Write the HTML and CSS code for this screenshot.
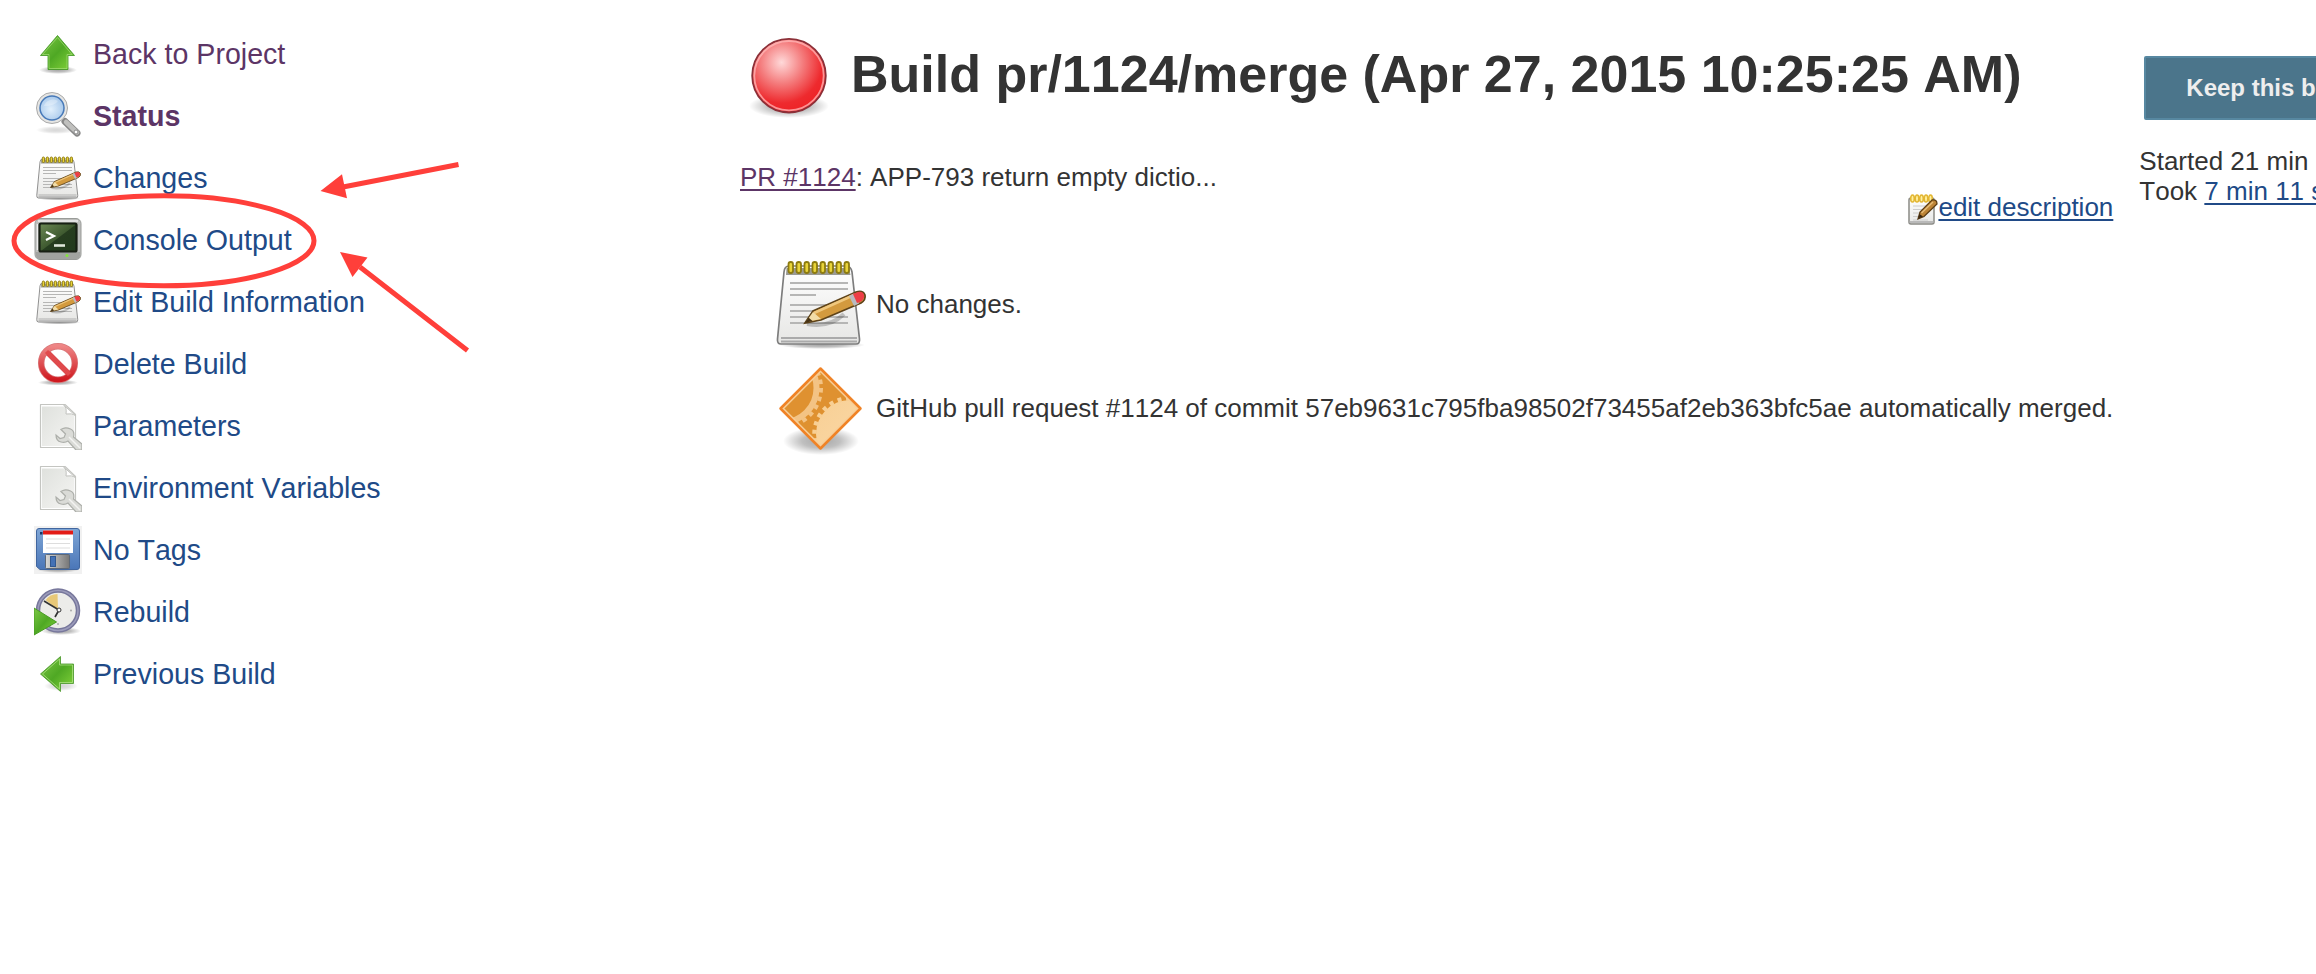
FILE: index.html
```html
<!DOCTYPE html>
<html lang="en">
<head>
<meta charset="utf-8">
<title>Build pr/1124/merge</title>
<link rel="stylesheet" href="styles.css">
</head>
<body>
<svg class="defs" aria-hidden="true">
  <defs>
    <linearGradient id="green" x1="0" y1="0" x2="1" y2="1"><stop offset="0" stop-color="#7cc845"/><stop offset=".5" stop-color="#4fa824"/><stop offset="1" stop-color="#86d63c"/></linearGradient>
    <linearGradient id="paper" x1="0" y1="0" x2="0" y2="1"><stop offset="0" stop-color="#ffffff"/><stop offset="1" stop-color="#e6e6e4"/></linearGradient>
    <linearGradient id="doc" x1="0" y1="0" x2="1" y2="1"><stop offset="0" stop-color="#dfe1dd"/><stop offset="1" stop-color="#f5f5f3"/></linearGradient>
    <linearGradient id="screen" x1="0" y1="0" x2="1" y2="1"><stop offset="0" stop-color="#6d8a55"/><stop offset=".5" stop-color="#3f5a30"/><stop offset=".52" stop-color="#263d1f"/><stop offset="1" stop-color="#223a1c"/></linearGradient>
    <linearGradient id="metal" x1="0" y1="0" x2="1" y2="0"><stop offset="0" stop-color="#d8d8d6"/><stop offset="1" stop-color="#777"/></linearGradient>
    <linearGradient id="blue" x1="0" y1="0" x2="0" y2="1"><stop offset="0" stop-color="#7fa6d6"/><stop offset="1" stop-color="#4a76b8"/></linearGradient>
    <linearGradient id="no" x1="0" y1="0" x2="0" y2="1"><stop offset="0" stop-color="#ee8585"/><stop offset="1" stop-color="#cf1a20"/></linearGradient>
    <linearGradient id="peach" x1="0" y1="0" x2="1" y2="1"><stop offset="0" stop-color="#f8cf94"/><stop offset="1" stop-color="#fbdcae"/></linearGradient>
    <radialGradient id="glass" cx=".45" cy=".55" r=".6"><stop offset="0" stop-color="#e2f0fc"/><stop offset="1" stop-color="#a4c6ea"/></radialGradient>
    <radialGradient id="ball" cx=".4" cy=".32" r=".65"><stop offset="0" stop-color="#ffd9d9"/><stop offset=".45" stop-color="#f47b7c"/><stop offset=".85" stop-color="#ee2a2e"/><stop offset="1" stop-color="#ee2428"/></radialGradient>
    <radialGradient id="shade"><stop offset="0" stop-color="#000" stop-opacity=".35"/><stop offset=".5" stop-color="#000" stop-opacity=".25"/><stop offset="1" stop-color="#000" stop-opacity="0"/></radialGradient>

    <symbol id="i-up" viewBox="0 0 48 48">
      <ellipse cx="24" cy="40" rx="19" ry="4" fill="url(#shade)"/>
      <path d="M23.500 5.500 40.500 25.500H34V39.500H14V25.500H6.500Z" fill="url(#green)" stroke="#3f9520" stroke-opacity=".8"/>
      <path d="M23.500 7.500 38 24.500H33V38.500H15V24.500H8.500Z" fill="none" stroke="#a9e07c" stroke-opacity=".65"/>
    </symbol>
    <symbol id="i-search" viewBox="0 0 48 48">
      <ellipse cx="22" cy="38" rx="20" ry="4" fill="url(#shade)" opacity=".45"/>
      <path d="M31 29.500 43 41" stroke="#888" stroke-width="7" stroke-linecap="round"/>
      <path d="M32 30 43 40.500" stroke="#c0c0be" stroke-width="4.500" stroke-linecap="round"/>
      <circle cx="42" cy="40" r="2" fill="#fff" stroke="#888"/>
      <circle cx="18" cy="16" r="15.500" fill="#e5e5e3" stroke="#aaa"/>
      <circle cx="18" cy="16" r="12" fill="url(#glass)" stroke="#4779b8" stroke-width="1.500"/>
      <path d="M10 14a9 8 0 0 1 14-5q-3 5-14 5" fill="#fff" opacity=".3"/>
    </symbol>
    <symbol id="i-note" viewBox="0 0 96 96">
      <ellipse cx="50" cy="89" rx="43" ry="4" fill="url(#shade)"/>
      <path d="M17 10H74Q79 10 80 16L87.500 83Q88 88 84 88H9Q5 88 5.500 83L12 16Q12.500 10 17 10Z" fill="url(#paper)" stroke="#7d7d7d" stroke-width="1.700"/>
      <path d="M14.500 12H77L78.500 19H14Z" fill="#9a9a92"/>
      <path d="M9 82H85M9 85.500H85" stroke="#aaa" stroke-width="1.800"/>
      <path d="M18 27H76M18 33H76M18 39H44M18 49H66M18 55H52M18 61H76M18 67H76" stroke="#b6b6b5" stroke-width="2"/>
      <g fill="#e9d43a" stroke="#8d7b10" stroke-width="1.800"><rect x="16.500" y="6" width="4.500" height="11" rx="2.200"/><rect x="24.500" y="6" width="4.500" height="11" rx="2.200"/><rect x="32.500" y="6" width="4.500" height="11" rx="2.200"/><rect x="40.500" y="6" width="4.500" height="11" rx="2.200"/><rect x="48.500" y="6" width="4.500" height="11" rx="2.200"/><rect x="56.500" y="6" width="4.500" height="11" rx="2.200"/><rect x="64.500" y="6" width="4.500" height="11" rx="2.200"/><rect x="72.500" y="6" width="4.500" height="11" rx="2.200"/></g>
      <path d="M35 68Q58 72 72 58" fill="none" stroke="#000" stroke-opacity=".2" stroke-width="4"/>
      <path d="M33 67 41 55 84 36Q91 34 93 39 94 44 89 47L49 64Z" fill="#d39a3e" stroke="#5e4319" stroke-width="1.700"/>
      <path d="M42 57 82 39" stroke="#efc77d" stroke-width="2.500"/>
      <path d="M34 66 41 56 49 63Z" fill="#f2dda8"/><path d="M33 67 36.500 61.500 40.500 65Z" fill="#463315"/>
      <path d="M77 40 82 37.500 87 47.500 82 50Z" fill="#b9bbc0"/>
      <path d="M81 38 86 36Q91 35 92 39 93 43 88 46L85 47Z" fill="#ed3e46"/>
    </symbol>
    <symbol id="i-term" viewBox="0 0 48 48">
      <rect x="1" y="2.500" width="46" height="41" rx="5" fill="#bdbebc" stroke="#999b98"/>
      <path d="M4 5H44M3.500 8V34" stroke="#eee" stroke-width="1.500"/>
      <path d="M2 36H46V39Q46 43 42 43H6Q2 43 2 39Z" fill="#a1a3a0"/>
      <rect x="5.500" y="7.500" width="37" height="28" rx="1.500" fill="url(#screen)" stroke="#182014" stroke-width="2.200"/>
      <path d="M12 16 20 20 12 24" fill="none" stroke="#fff" stroke-width="2.200"/><path d="M20 29.500H31" stroke="#dfe6da" stroke-width="2.600"/>
      <circle cx="33" cy="39.500" r="1.500" fill="#83e43c"/>
    </symbol>
    <symbol id="i-del" viewBox="0 0 48 48">
      <ellipse cx="24" cy="42.500" rx="20" ry="3" fill="url(#shade)"/>
      <circle cx="24" cy="23" r="16.800" fill="none" stroke="#d8787a" stroke-width="6.500"/>
      <path d="M12.500 11.500 35.500 34.500" stroke="#d8494c" stroke-width="5.500"/>
      <circle cx="24" cy="23" r="16.800" fill="none" stroke="url(#no)" stroke-width="5"/>
      <path d="M12.500 11.500 35.500 34.500" stroke="#e04a4c" stroke-width="4.500"/>
    </symbol>
    <symbol id="i-param" viewBox="0 0 48 48">
      <path d="M6.500 2.500H31L41.500 12.500V45.500H6.500Z" fill="#fff" stroke="#c4c5c1" stroke-width="1.200" stroke-linejoin="round"/>
      <path d="M8 4.500H30L40 14V44H8Z" fill="url(#doc)"/>
      <path d="M29.500 3Q33 5 32 12 38 11 41.500 13.500Z" fill="#fff" stroke="#c2c3bf"/>
      <path d="M27 27.500 31.500 32 30 35.500 26 36.500 22 33Q22 39 27 40 31 41 34 39L42 48H48V42L39.500 35Q41 29 36.500 27 32 25 29 26.500Z" fill="#dadbd7" stroke="#adafaa" stroke-width="1.200"/>
      <path d="M35 35 46 46" stroke="#f3f3f1" stroke-width="1.500"/>
    </symbol>
    <symbol id="i-save" viewBox="0 0 48 48">
      <path d="M0 0H48V48H0Z" fill="#f1f1f1"/>
      <ellipse cx="24" cy="43" rx="22" ry="4" fill="url(#shade)"/>
      <path d="M5 2.500H43Q45.500 2.500 45.500 5V41Q45.500 43.500 43 43.500H6L2.500 40.500V5Q2.500 2.500 5 2.500Z" fill="url(#blue)" stroke="#41669f"/>
      <path d="M9 4.500H39V27H9Z" fill="#fff"/><path d="M9 4.500H39V8.500H9Z" fill="#e31b16"/>
      <path d="M12 13H36M12 17.500H36M12 22H36" stroke="#ddd"/>
      <rect x="6" y="6" width="2.500" height="2.500" fill="#183766"/>
      <rect x="11.500" y="28.500" width="24" height="14" rx="1" fill="url(#metal)" stroke="#5c6878"/>
      <rect x="16.500" y="30.500" width="5" height="10" fill="#4371b5" stroke="#31588f"/>
    </symbol>
    <symbol id="i-rebuild" viewBox="0 0 48 48">
      <ellipse cx="27" cy="43" rx="20" ry="4" fill="url(#shade)"/>
      <circle cx="24" cy="22.500" r="20" fill="#ecece9" stroke="#77779b" stroke-width="4.500"/>
      <circle cx="24" cy="22.500" r="20" fill="none" stroke="#9c9cbb" stroke-width="1.500"/>
      <path d="M24 22 11.500 12Q16 6 23.500 6Z" fill="#e8c878"/>
      <path d="M10 13 25 22 21 29" fill="none" stroke="#333" stroke-width="1.700"/><circle cx="25" cy="22" r="2" fill="#fff" stroke="#333"/>
      <circle cx="37" cy="22.500" r="1" fill="#aaa"/><circle cx="24" cy="36" r="1" fill="#aaa"/>
      <path d="M0 20 22.500 34 0 47Z" fill="url(#green)" stroke="#489b25"/>
    </symbol>
    <symbol id="i-prev" viewBox="0 0 48 48">
      <ellipse cx="27" cy="36" rx="17" ry="5" fill="url(#shade)" opacity=".5"/>
      <path d="M6.500 24 26.500 6.500V14H39.500V33.500H26.500V41.500Z" fill="url(#green)" stroke="#49962a" stroke-opacity=".8"/>
      <path d="M8.500 24 25.500 9V15H38.500V32.500H25.500V39Z" fill="none" stroke="#b5e68b" stroke-opacity=".7"/>
    </symbol>
    <symbol id="i-edit" viewBox="0 0 30 32">
      <rect x="1" y="4" width="25" height="26" rx="2" fill="url(#paper)" stroke="#8a8a85" stroke-width="1.500"/>
      <path d="M5 12H20M5 15.500H18M5 19H16M5 22.500H12M5 26H20" stroke="#ccc"/>
      <path d="M1 28H26" stroke="#aaa" stroke-width="1.500"/>
      <g fill="#fff1a0" stroke="#e3b632" stroke-width="1.600"><ellipse cx="4.500" cy="4.500" rx="1.800" ry="3.500"/><ellipse cx="9" cy="4.500" rx="1.800" ry="3.500"/><ellipse cx="13.500" cy="4.500" rx="1.800" ry="3.500"/><ellipse cx="18" cy="4.500" rx="1.800" ry="3.500"/><ellipse cx="22.500" cy="4.500" rx="1.800" ry="3.500"/></g>
      <path d="M10 25 12 18 24 6Q29 5 29 10L16 22.500Z" fill="#bd8437" stroke="#5c3d14" stroke-width="1.300"/><path d="M13.500 19 25 8" stroke="#e7bd78" stroke-width="1.500"/><path d="M10 25 11.500 20 15 22.500Z" fill="#3b2812"/>
    </symbol>
    <symbol id="i-ball" viewBox="0 0 96 96">
      <ellipse cx="49" cy="76" rx="40" ry="12" fill="url(#shade)"/>
      <circle cx="49" cy="45.700" r="36.800" fill="url(#ball)" stroke="#8c3038" stroke-width="1.800"/>
      <circle cx="49" cy="45.700" r="34.700" fill="none" stroke="#ffb9b9" stroke-width="1.800" opacity=".75"/>
    </symbol>
    <symbol id="i-gear" viewBox="0 0 96 96">
      <ellipse cx="49" cy="81" rx="38" ry="14" fill="url(#shade)"/>
      <clipPath id="dia"><path d="M48.500 9 88 48.500 48.500 88 9 48.500Z"/></clipPath>
      <path d="M48.500 9 88 48.500 48.500 88 9 48.500Z" fill="#df9130"/>
      <g clip-path="url(#dia)">
        <circle cx="10" cy="28" r="34.500" fill="none" stroke="#f3c384" stroke-width="6"/>
        <circle cx="10" cy="28" r="39" fill="none" stroke="#f3c384" stroke-width="4" stroke-dasharray="4.500 4.250"/>
        <circle cx="78" cy="74" r="34" fill="url(#peach)"/>
        <circle cx="78" cy="74" r="35.500" fill="none" stroke="#f8cf94" stroke-width="4.500" stroke-dasharray="4 4.580"/>
      </g>
      <path d="M48.500 11 86 48.500 48.500 86 11 48.500Z" fill="none" stroke="#f8cf98" stroke-width="2"/>
      <path d="M48.500 8.500 88.500 48.500 48.500 88.500 8.500 48.500Z" fill="none" stroke="#f08326" stroke-width="2.500" stroke-linejoin="round"/>
    </symbol>
  </defs>
</svg>

<div class="page">
  <nav class="tasks">
    <a class="task visited" href="#"><svg class="icon"><use href="#i-up"/></svg>Back to Project</a>
    <a class="task visited current" href="#"><svg class="icon"><use href="#i-search"/></svg>Status</a>
    <a class="task" href="#"><svg class="icon"><use href="#i-note"/></svg>Changes</a>
    <a class="task" href="#"><svg class="icon"><use href="#i-term"/></svg>Console Output</a>
    <a class="task" href="#"><svg class="icon"><use href="#i-note"/></svg>Edit Build Information</a>
    <a class="task" href="#"><svg class="icon"><use href="#i-del"/></svg>Delete Build</a>
    <a class="task" href="#"><svg class="icon"><use href="#i-param"/></svg>Parameters</a>
    <a class="task" href="#"><svg class="icon"><use href="#i-param"/></svg>Environment Variables</a>
    <a class="task" href="#"><svg class="icon"><use href="#i-save"/></svg>No Tags</a>
    <a class="task" href="#"><svg class="icon"><use href="#i-rebuild"/></svg>Rebuild</a>
    <a class="task" href="#"><svg class="icon"><use href="#i-prev"/></svg>Previous Build</a>
  </nav>

  <main class="main">
    <h1 class="title"><svg class="icon-large"><use href="#i-ball"/></svg><span>Build pr/1124/merge (Apr 27, 2015 10:25:25 AM)</span></h1>
    <div class="description"><a class="link visited" href="#">PR #1124</a>: APP-793 return empty dictio...</div>
    <div class="edit"><svg class="icon-small"><use href="#i-edit"/></svg><a class="link" href="#">edit description</a></div>
    <div class="summary">
      <div class="row"><svg class="icon-large"><use href="#i-note"/></svg><span>No changes.</span></div>
      <div class="row"><svg class="icon-large"><use href="#i-gear"/></svg><span>GitHub pull request #1124 of commit 57eb9631c795fba98502f73455af2eb363bfc5ae automatically merged.</span></div>
    </div>
  </main>

  <aside class="side">
    <button class="keep">Keep this build forever</button>
    <div>Started 21 min</div>
    <div>Took <a class="link" href="#">7 min 11 sec</a></div>
  </aside>

  <svg class="annotation" viewBox="0 0 500 380">
    <ellipse cx="164" cy="240.800" rx="150" ry="45" fill="none" stroke="#ff3f3a" stroke-width="5"/>
    <path d="M343 187 458.500 164.500M360 267 467.500 350.500" stroke="#ff3f3a" stroke-width="5"/>
    <path d="M320.500 191 342 174.300 347 198.300ZM340 252 367.500 257.500 352.500 277Z" fill="#ff3f3a"/>
  </svg>
</div>
</body>
</html>
```
FILE: styles.css
```css
* { box-sizing: border-box; }
body {
  margin: 0;
  background: #fff;
  color: #333;
  font: 26px/30px "Liberation Sans", Arial, sans-serif;
  font-kerning: none;
  overflow: hidden;
}
.defs { position: absolute; width: 0; height: 0; }
.page {
  position: relative;
  display: flex;
  width: 2316px;
  height: 974px;
  overflow: hidden;
  white-space: nowrap;
}
.tasks {
  flex: 0 0 740px;
  display: flex;
  flex-direction: column;
  align-items: flex-start;
  gap: 14px;
  padding: 30px 0 0 34px;
}
.task {
  display: flex;
  align-items: center;
  gap: 11px;
  height: 48px;
  font-size: 28.6px;
  color: #204a87;
  text-decoration: none;
}
.icon { width: 48px; height: 48px; }
.icon-large { width: 96px; height: 96px; flex: none; }
.icon-small { width: 30px; height: 32px; }
.task.visited, .link.visited { color: #5c3566; }
.current { font-weight: bold; }
.main { flex: 0 0 1373px; padding-top: 30px; }
.title {
  display: flex;
  align-items: flex-start;
  gap: 15px;
  height: 132px;
  margin: 0;
  font-size: 52px;
  line-height: 88px;
}
.link {
  color: #204a87;
  text-decoration: underline;
  text-decoration-thickness: 2px;
  text-underline-offset: 3px;
  text-decoration-skip-ink: none;
}
.edit {
  display: flex;
  justify-content: flex-end;
  height: 64px;
}
.edit .icon-small { margin-top: 2px; }
.summary {
  display: flex;
  flex-direction: column;
  gap: 8px;
  padding-left: 32px;
}
.row { display: flex; align-items: center; gap: 8px; }
.side { flex: none; padding: 56px 0 0 26px; }
.keep {
  display: block;
  height: 64px;
  margin: 0 0 26px 5px;
  padding: 0 40px;
  border: 2px solid #5788a1;
  border-radius: 2px;
  background: #4b758b;
  color: #eee;
  font: bold 24px/28px "Liberation Sans", Arial, sans-serif;
}
.annotation {
  position: absolute;
  left: 0;
  top: 0;
  width: 500px;
  height: 380px;
  pointer-events: none;
}
```
